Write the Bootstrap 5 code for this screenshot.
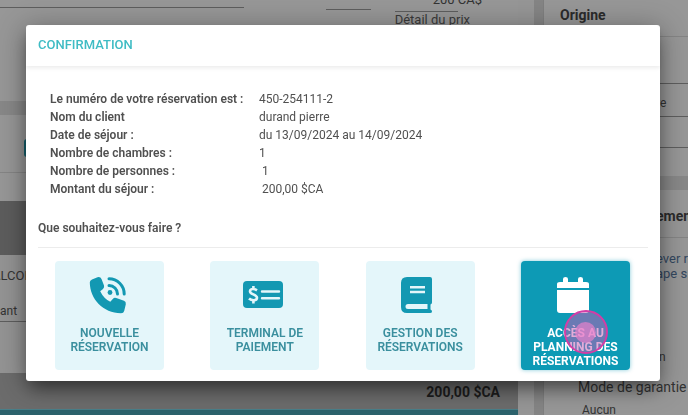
<!DOCTYPE html>
<html lang="fr">
<head>
<meta charset="utf-8">
<meta name="viewport" content="width=device-width, initial-scale=1">
<title>Confirmation</title>
<link href="https://cdn.jsdelivr.net/npm/bootstrap@5.3.0/dist/css/bootstrap.min.css" rel="stylesheet">
<style>
body { font-family: Roboto, "Liberation Sans", sans-serif; font-size: 12px; line-height: 18px; color: #4b4b4b; background: #8a8a8a; }
.bg-page { color: #333; }
.pane { background: #979797; }
.side { flex: 0 0 145px; min-width: 0; overflow: hidden; border-left: 1px solid #7f7f7f; }
.gutter { flex: 0 0 25px; background: linear-gradient(90deg, #969696 0 16px, #858585 16px); }
.rule { border-bottom: 1px solid #858585; }
.rule-dark { border-bottom: 1px solid #5e5e5e; }
.gap-strip { background: #888; height: 14px; }
.h-prices { height: 101px; }
.price-top { height: 8px; }
.price-a { width: 45px; height: 10px; }
.price-b { width: 63px; height: 12px; line-height: 0; font-size: 13px; padding-left: 38px; white-space: nowrap; }
.detail { color: #3a3a3a; font-size: 13px; line-height: 16px; }
.h-tools { height: 58px; }
.tool-btn { width: 40px; height: 18px; background: #15606d; border: 0; border-radius: 3px; }
.h-empty { height: 28px; }
.h-dark { height: 54px; background: #5d5d5d; }
.h-row { height: 118px; background: #949494; font-size: 13px; }
.room-name { text-indent: -8px; font-size: 13px; }
.row-field { width: 40px; font-size: 12px; line-height: 20px; }
.total { background: #6c6c6c; color: #1c1c1c; font-size: 14px; height: 36px; padding: 10px 18px 0 0; }
.foot { height: 6px; background: #2c626c; border-top: 1px solid #487f89; }
.side-title { font-size: 14px; font-weight: 700; color: #2b2b2b; }
.side a { color: #33475f; font-size: 13px; line-height: 15px; text-decoration: none; }
.h-a { height: 37px; padding-top: 6px; }
.h-b { height: 47px; }
.h-c { height: 33px; padding-top: 10px; }
.h-d { height: 31px; }
.h-e { height: 28px; }
.h-f { height: 48px; padding-top: 17px; }
.h-g { height: 110px; padding-top: 13px; }
.edge { padding-left: 112px; white-space: nowrap; }
.mode { font-size: 14px; padding-left: 34px; padding-top: 12px; white-space: nowrap; }
.guarantee { padding: 5px 0 0 38px; }
.confirm-dialog { margin: 25px 28px 0 26px; max-width: none; }
.confirm-box { border: 0; border-radius: 3px; box-shadow: 0 10px 16px -4px rgba(0,0,0,.4), 0 4px 28px 2px rgba(0,0,0,.3); color: #505050; }
.confirm-head { padding: 11px 12px 12px; border: 0; box-shadow: 0 2px 4px rgba(0,0,0,.08); }
.confirm-head h1 { font-size: 13px; line-height: 18px; font-weight: 500; color: #3fbcc4; }
.confirm-main { padding: 24px 12px 11px; }
.facts { margin: 0 12px 21px; }
.facts th { width: 209px; padding: 0; font-weight: 600; }
.facts td { padding: 0; }
.facts .inset { padding-left: 3px; }
.ask { font-weight: 600; padding-bottom: 10px; border-bottom: 1px solid #ececec; margin-bottom: 13px; }
.choices { padding: 0 18px 0 17px; }
.choice { width: 109px; height: 109px; padding: 15px 2px 0; border: 0; border-radius: 4px; background: #e4f6fa; color: #3a8f9e; font-size: 12px; font-weight: 600; line-height: 14px; }
.choice svg { width: 42px; height: 38px; margin: 0 4px 12px 0; flex-shrink: 0; fill: #1398b2; }
.choice.chosen { background: #0d9ab5; color: #fff; font-weight: 700; box-shadow: 0 0 4px rgba(13,154,181,.5); }
.choice.chosen svg { fill: #fff; }
.tap { left: 43px; top: 49px; width: 44px; height: 44px; border-radius: 50%; background: rgba(200,90,180,.5); border: 2px solid #d33da6; }
.tap i { width: 21px; height: 21px; border-radius: 50%; background: rgba(240,130,205,.65); }
</style>
<script src="https://cdn.jsdelivr.net/npm/bootstrap@5.3.0/dist/js/bootstrap.bundle.min.js"></script>
</head>
<body class="vh-100 overflow-hidden">
<div class="bg-page d-flex vh-100 overflow-hidden" aria-hidden="true">
  <div class="pane flex-grow-1">
    <div class="h-prices d-flex justify-content-end">
      <div class="flex-grow-1"><div class="rule-dark w-75 price-top"></div></div>
      <div class="price-a rule-dark me-4"></div>
      <div class="me-5"><div class="price-b rule-dark">200 CA$</div><a href="#" class="detail d-block text-decoration-underline" tabindex="-1">Détail du prix</a></div>
    </div>
    <div class="gap-strip"></div>
    <div class="h-tools rule pt-4 px-4"><button class="tool-btn" type="button" aria-label="Modifier" tabindex="-1"></button></div>
    <div class="h-empty"></div>
    <div class="h-dark"></div>
    <div class="h-row pt-2"><div class="room-name pt-1">ALCON</div><div class="row-field rule-dark pt-3">ant</div></div>
    <div class="total fw-bold text-end">200,00 $CA</div>
    <div class="foot"></div>
  </div>
  <div class="gutter"></div>
  <div class="side pane">
    <div class="h-a rule side-title ps-3">Origine</div>
    <div class="h-b rule-dark"></div>
    <div class="h-c rule-dark edge">re</div>
    <div class="h-d rule-dark"></div>
    <div class="h-e"></div>
    <div class="gap-strip"></div>
    <div class="h-f rule side-title edge">ement</div>
    <div class="h-g edge"><a href="#" class="d-block" tabindex="-1">ever r</a><a href="#" class="d-block" tabindex="-1">ape s</a></div>
    <div class="edge">in</div>
    <div class="mode">Mode de garantie</div>
    <div class="guarantee">Aucun</div>
  </div>
</div>

<div class="modal d-block overflow-hidden" role="dialog" aria-labelledby="dlg-title">
  <div class="modal-dialog confirm-dialog">
    <div class="modal-content confirm-box">
      <div class="modal-header confirm-head"><h1 id="dlg-title" class="m-0">CONFIRMATION</h1></div>
      <div class="modal-body confirm-main">
        <table class="facts">
          <tr><th scope="row">Le numéro de votre réservation est :</th><td>450-254111-2</td></tr>
          <tr><th scope="row">Nom du client</th><td>durand pierre</td></tr>
          <tr><th scope="row">Date de séjour :</th><td>du 13/09/2024 au 14/09/2024</td></tr>
          <tr><th scope="row">Nombre de chambres :</th><td>1</td></tr>
          <tr><th scope="row">Nombre de personnes :</th><td class="inset">1</td></tr>
          <tr><th scope="row">Montant du séjour :</th><td class="inset">200,00 $CA</td></tr>
        </table>
        <div class="ask">Que souhaitez-vous faire ?</div>
        <div class="choices d-flex justify-content-between">
          <button type="button" class="choice d-flex flex-column align-items-center">
            <svg viewBox="0 0 42 38"><path d="M5 3.500 10.500 1.200Q13.500.5 14.500 3L17 9.500Q17.600 11.400 16 12.900L13.200 15.200Q16.700 22.500 23.300 25.800L26 22.700Q27.300 21.200 29.200 22L37 24.800Q39.200 25.800 38.800 28.200L37.200 35Q36.600 37.200 34 37.200C16 37 3 23 2.800 6.500Q2.800 4.300 5 3.500Z"/><circle cx="23" cy="16.500" r="2.400"/><path d="M22 9.500a8.500 8.500 0 0 1 8.500 8.500M22 2.800a15.200 15.200 0 0 1 15.200 15.200" fill="none" stroke="#1398b2" stroke-width="3" stroke-linecap="round"/></svg>
            <span>NOUVELLE RÉSERVATION</span>
          </button>
          <button type="button" class="choice d-flex flex-column align-items-center">
            <svg viewBox="0 0 42 38"><rect x="1" y="5" width="40" height="27" rx="4"/><path d="M15 14.300C12 12.300 8 12.600 8 15.500S15 18.500 15 21.800 9.500 24.800 7 22.500M11.400 10v3M11.400 24v3.500" fill="none" stroke="#e4f6fa" stroke-width="2.600"/><path d="M20 15.500h17M20 22.300h17" fill="none" stroke="#e4f6fa" stroke-width="2.400" stroke-linecap="round"/></svg>
            <span>TERMINAL DE PAIEMENT</span>
          </button>
          <button type="button" class="choice d-flex flex-column align-items-center">
            <svg viewBox="0 0 42 38"><path d="M11 1H33Q35 1 35 3V26.500Q35 28 33.500 28.500V33.500Q35 34 35 35.500Q35 37 33 37H10Q4 37 4 31V7Q4 1 10 1Z"/><path d="M11 28h19.500v5H11a2.500 2.500 0 0 1 0-5ZM13 10h15v2.400H13ZM13 14.800h15v2.400H13Z" fill="#e4f6fa"/></svg>
            <span>GESTION DES RÉSERVATIONS</span>
          </button>
          <button type="button" class="choice chosen position-relative d-flex flex-column align-items-center">
            <svg viewBox="0 0 42 38"><path d="M5 12V8Q5 6 8 6H11V3Q11 1 13.500 1T16 3V6H26V3Q26 1 28.500 1T31 3V6H34Q37 6 37 8V12ZM5 14H37V34Q37 37 34 37H8Q5 37 5 34Z"/></svg>
            <span>ACCÈS AU PLANNING DES RÉSERVATIONS</span>
            <span class="tap position-absolute d-flex align-items-center justify-content-center"><i></i></span>
          </button>
        </div>
      </div>
    </div>
  </div>
</div>
</body>
</html>
